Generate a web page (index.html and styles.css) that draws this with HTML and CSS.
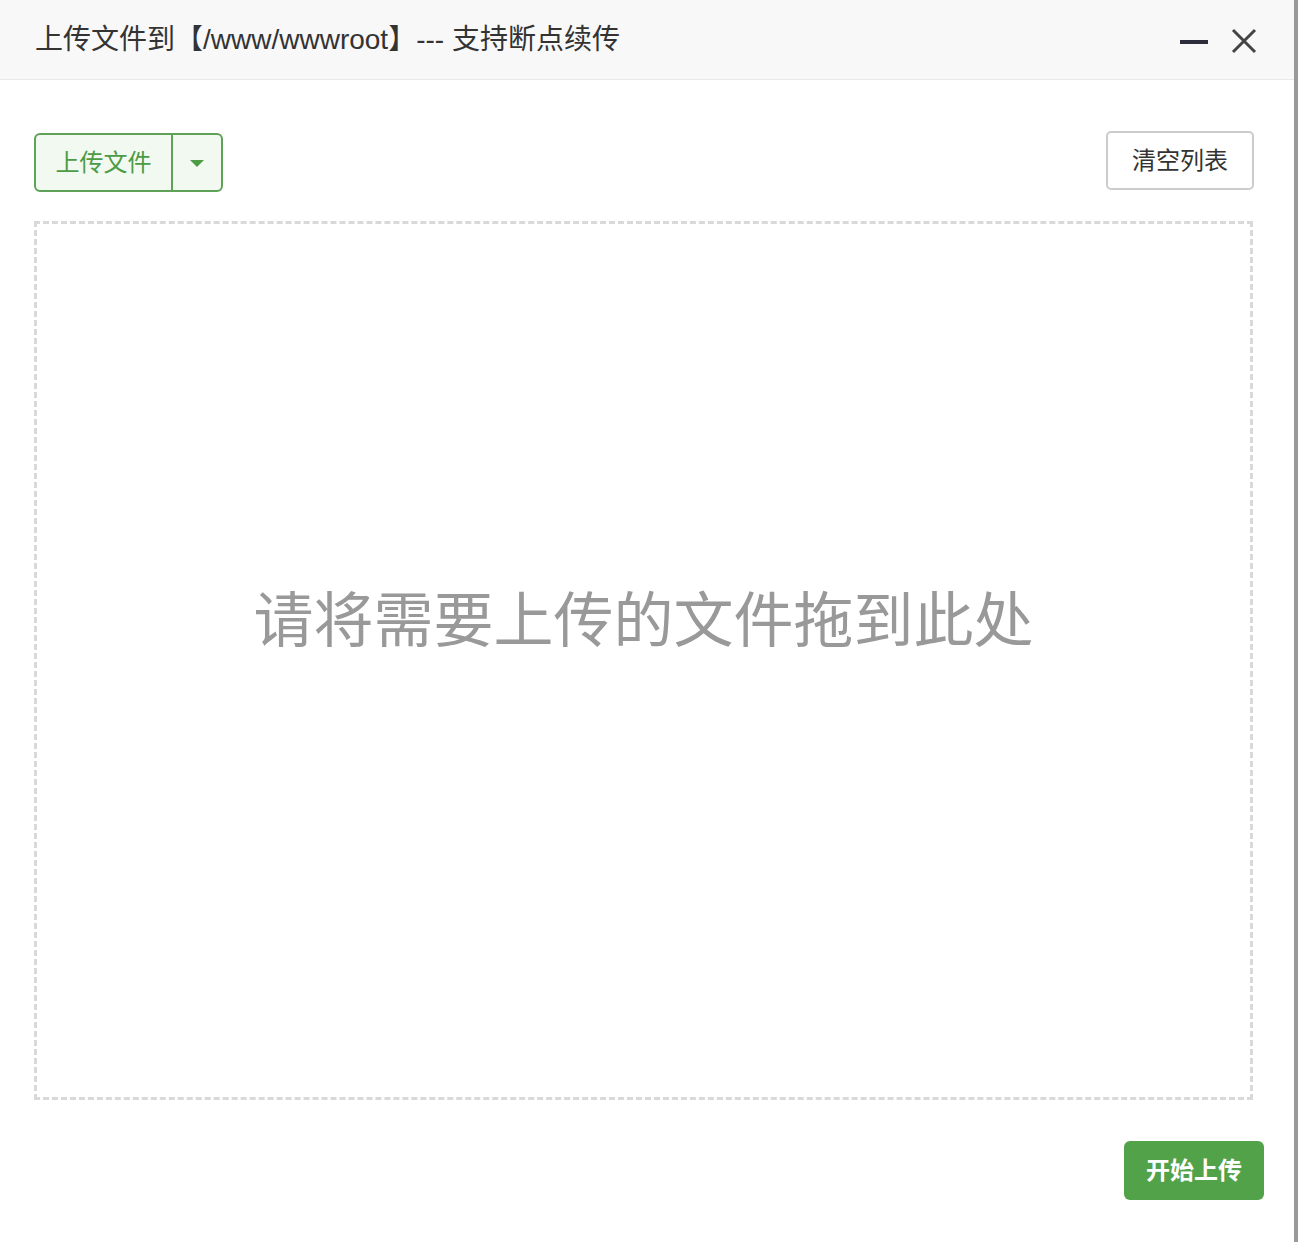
FILE: index.html
```html
<!DOCTYPE html>
<html>

	<head>
		<meta charset="UTF-8">
		<title>上传文件</title>
		<link rel="stylesheet" href="styles.css">
	</head>

	<body>
		<div id="wrap">
			<div id="dialog">
				<div class="title">
					<span class="title-text">上传文件到【/www/wwwroot】--- 支持断点续传</span>
					<span class="min"></span>
					<svg class="close" width="26" height="26" viewBox="0 0 26 26">
						<path d="M2 2 L24 24 M24 2 L2 24" stroke="#444" stroke-width="3" fill="none" />
					</svg>
				</div>
				<div class="content">
					<div class="toolbar">
						<div class="up-group">
							<span class="up-btn">上传文件</span>
							<span class="up-caret"><i></i></span>
						</div>
						<span class="clear-btn">清空列表</span>
					</div>
					<div class="drop">请将需要上传的文件拖到此处</div>
					<div class="foot">
						<span class="start-btn">开始上传</span>
					</div>
				</div>
			</div>
			<div class="side"></div>
		</div>
	</body>

</html>
```

FILE: styles.css
```css
* {
	margin: 0;
	padding: 0;
	box-sizing: border-box;
}

body {
	font-family: "Liberation Sans", "Noto Sans CJK SC", sans-serif;
	color: #333;
	background: #fff;
}

#wrap {
	display: flex;
	height: 1242px;
}

#dialog {
	flex: 1;
	display: flex;
	flex-direction: column;
}

.side {
	width: 4px;
	background: #999;
}

.title {
	height: 80px;
	background: #f8f8f8;
	border-bottom: 1px solid #e9e9e9;
	display: flex;
	align-items: center;
	padding: 0 37px 0 35px;
}

.title-text {
	font-size: 28px;
	color: #333;
	flex: 1;
	margin-top: -6px;
}

.min {
	width: 28px;
	height: 4px;
	background: #2c2c3a;
	margin-right: 23px;
	margin-top: 4px;
}

.close {
	margin-top: 3px;
}

.content {
	padding: 51px 41px 0 34px;
	flex: 1;
	display: flex;
	flex-direction: column;
}

.toolbar {
	display: flex;
	justify-content: space-between;
	align-items: flex-start;
	height: 59px;
}

.up-group {
	display: flex;
	height: 59px;
	margin-top: 2px;
	border: 2px solid #5ea258;
	border-radius: 6px;
	background: #f2f9f1;
}

.up-btn {
	width: 137px;
	font-size: 24px;
	line-height: 55px;
	text-align: center;
	color: #4c9b45;
	border-right: 2px solid #5ea258;
}

.up-caret {
	width: 48px;
	display: flex;
	align-items: center;
	justify-content: center;
}

.up-caret i {
	width: 0;
	height: 0;
	border-left: 7px solid transparent;
	border-right: 7px solid transparent;
	border-top: 7px solid #4c9b45;
	margin-top: 2px;
}

.clear-btn {
	width: 148px;
	height: 59px;
	border: 2px solid #ccc;
	border-radius: 5px;
	font-size: 24px;
	line-height: 55px;
	text-align: center;
	color: #333;
	margin-right: -1px;
}

.drop {
	margin-top: 31px;
	height: 879px;
	border: 3px dashed #d9d9d9;
	padding-top: 368px;
	text-align: center;
	font-size: 60px;
	line-height: 60px;
	color: #999;
}

.foot {
	display: flex;
	justify-content: flex-end;
	margin-right: -11px;
	margin-top: 41px;
}

.start-btn {
	width: 140px;
	height: 59px;
	background: #52a24a;
	border-radius: 6px;
	color: #fff;
	font-size: 24px;
	font-weight: bold;
	line-height: 59px;
	text-align: center;
}
```
